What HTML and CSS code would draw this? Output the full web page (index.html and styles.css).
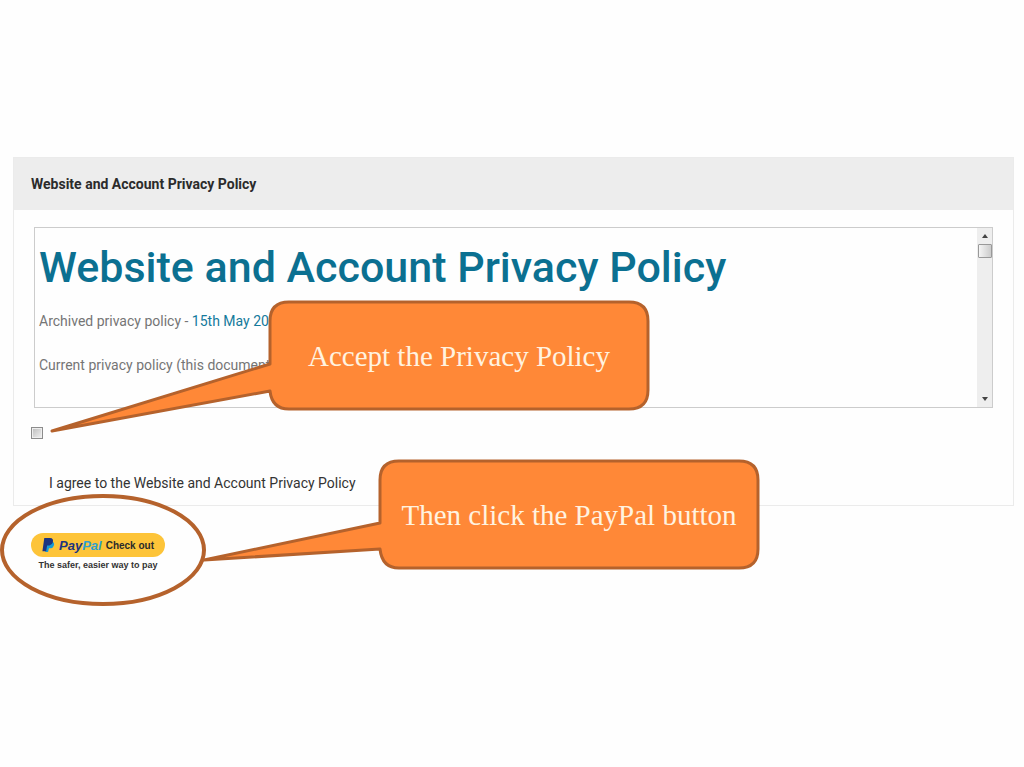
FILE: index.html
```
<!DOCTYPE html>
<html lang="en">
<head>
    <meta charset="UTF-8">
    <meta name="viewport" content="width=device-width, initial-scale=1.0">
    <title>Website and Account Privacy Policy</title>
    <link rel="stylesheet" href="styles.css">
</head>
<body>
    <main class="slide">
        <section class="panel">
            <h2 class="panel-title">Website and Account Privacy Policy</h2>
            <div class="panel-body">
                <div class="policy-box">
                    <div class="policy-text">
                        <h1>Website and Account Privacy Policy</h1>
                        <p>Archived privacy policy - <a href="#">15th May 2018</a></p>
                        <p>Current privacy policy (this document)</p>
                    </div>
                    <div class="scrollbar" aria-hidden="true">
                        <span class="arrow up"></span>
                        <span class="thumb"></span>
                        <span class="arrow down"></span>
                    </div>
                </div>
                <input type="checkbox" id="agree" class="agree-box">
                <label for="agree" class="agree-label">I agree to the Website and Account Privacy Policy</label>
            </div>
        </section>

        <div class="checkout">
            <button type="button" class="paypal-button">
                <svg class="paypal-mark" width="13" height="15" viewBox="0 0 13 16" aria-hidden="true">
                    <path d="M5 4h6c2 1 2 4 0 6-1 1-2 1-4 1l-1 4H3z" fill="#179bd7"/>
                    <path d="M2 0h6c3 0 4 2 3 5-1 2-3 3-5 3H5l-1 6H0z" fill="#1c3480"/>
                </svg>
                <span class="paypal-name">Pay<span>Pal</span></span>
                <span>Check out</span>
            </button>
            <p class="tagline">The safer, easier way to pay</p>
            <svg class="ring" width="206" height="112" viewBox="0 0 206 112" aria-hidden="true">
                <ellipse cx="103" cy="56" rx="101" ry="54"/>
            </svg>
        </div>

        <div class="callout callout-policy">
            <svg aria-hidden="true">
                <path d="M1 63V20Q1 1 20 1H360Q379 1 379 20V89Q379 108 360 108H20Q3 108 1 90L-217 130Z"/>
            </svg>
            <p>Accept the Privacy Policy</p>
        </div>

        <div class="callout callout-paypal">
            <svg aria-hidden="true">
                <path d="M1 63V20Q1 1 20 1H360Q379 1 379 20V89Q379 108 360 108H20Q3 108 1 89L-175 100Z"/>
            </svg>
            <p>Then click the PayPal button</p>
        </div>
    </main>
</body>
</html>
```

FILE: styles.css
```
* {
    box-sizing: border-box;
}
body {
    font-family: Roboto, Arial, sans-serif;
    font-size: 14px;
    line-height: 20px;
    margin: 0;
    color: #333;
    background: #fefefe;
}
h1, h2, p {
    margin: 0;
}
.slide {
    position: relative;
    min-height: 100vh;
    padding: 157px 10px 40px 13px;
}

/* Policy panel */
.panel {
    border: 1px solid #ebebeb;
}
.panel-title {
    padding: 16px 17px;
    font-size: 14px;
    font-weight: bold;
    background: #ededed;
    color: #2b2b2b;
}
.panel-body {
    padding: 17px 20px 12px;
}
.policy-box {
    display: flex;
    height: 181px;
    border: 1px solid #ccc;
    overflow: hidden;
}
.policy-text {
    flex: 1;
    padding: 11px 4px;
    color: #757575;
}
.policy-text h1 {
    font-size: 43px;
    line-height: 56px;
    font-weight: 500;
    color: #0b7091;
}
.policy-text p {
    margin: 16px 0 24px;
}
.policy-text a {
    color: #147a9c;
    text-decoration: none;
}
.scrollbar {
    display: flex;
    flex-direction: column;
    align-items: center;
    width: 15px;
    padding: 6px 0;
    background: #eee;
}
.arrow {
    border: 3px solid transparent;
}
.arrow.up {
    border-top: 0;
    border-bottom: 4px solid #444;
}
.arrow.down {
    margin-top: auto;
    border-bottom: 0;
    border-top: 4px solid #444;
}
.thumb {
    width: 14px;
    height: 14px;
    margin-top: 6px;
    border: 1px solid #999;
    border-radius: 1px;
    background: linear-gradient(to right, #f5f5f5, #ccc);
}
.agree-box {
    appearance: none;
    display: block;
    width: 12px;
    height: 12px;
    margin: 19px 0 0 -3px;
    border: 1px solid #8c8c8c;
    box-shadow: inset 0 0 0 1px #eee;
    background: linear-gradient(135deg, #bbb, #f2f2f2);
}
.agree-label {
    display: block;
    margin: 34px 0 0 15px;
}

/* PayPal */
.checkout {
    position: relative;
    width: 134px;
    margin: 27px 0 0 18px;
    text-align: center;
}
.paypal-button {
    display: flex;
    align-items: center;
    justify-content: center;
    gap: 4px;
    width: 100%;
    height: 24px;
    padding: 0;
    border: 0;
    border-radius: 12px;
    background: #fdc439;
    color: #2b2b2b;
    font: bold 10px "Liberation Sans", Arial, sans-serif;
    cursor: pointer;
}
.paypal-name {
    font-size: 13px;
    font-style: italic;
    color: #1c3480;
}
.paypal-name span {
    color: #2f9fd0;
}
.tagline {
    font: bold 9px/16px "Liberation Sans", Arial, sans-serif;
    white-space: nowrap;
}
.ring {
    position: absolute;
    top: -39px;
    left: -31px;
    pointer-events: none;
}
.ring ellipse {
    fill: none;
    stroke: #b5622c;
    stroke-width: 4;
}

/* Callouts */
.callout {
    position: absolute;
    display: flex;
    align-items: center;
    justify-content: center;
    width: 380px;
    height: 109px;
    color: #fff3e0;
    font: 29px/32px "Liberation Serif", "Times New Roman", serif;
}
.callout svg {
    position: absolute;
    inset: 0;
    width: 100%;
    height: 100%;
    overflow: visible;
}
.callout path {
    fill: #ff8837;
    stroke: #b5622c;
    stroke-width: 3;
    stroke-linejoin: round;
}
.callout p {
    position: relative;
}
.callout-policy {
    top: 301px;
    left: 269px;
}
.callout-paypal {
    top: 460px;
    left: 379px;
}
```
